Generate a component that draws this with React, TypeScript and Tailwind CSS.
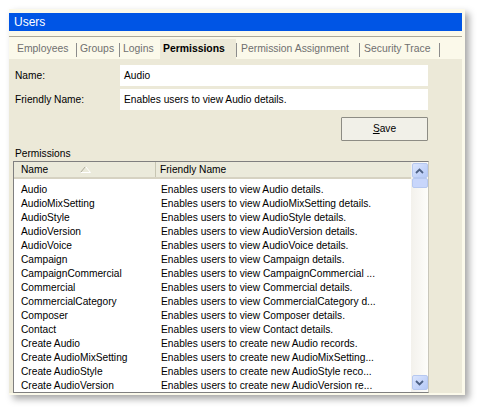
import React from 'react'

const rows: [string, string][] = [
  ['Audio', 'Enables users to view Audio details.'],
  ['AudioMixSetting', 'Enables users to view AudioMixSetting details.'],
  ['AudioStyle', 'Enables users to view AudioStyle details.'],
  ['AudioVersion', 'Enables users to view AudioVersion details.'],
  ['AudioVoice', 'Enables users to view AudioVoice details.'],
  ['Campaign', 'Enables users to view Campaign details.'],
  ['CampaignCommercial', 'Enables users to view CampaignCommercial ...'],
  ['Commercial', 'Enables users to view Commercial details.'],
  ['CommercialCategory', 'Enables users to view CommercialCategory d...'],
  ['Composer', 'Enables users to view Composer details.'],
  ['Contact', 'Enables users to view Contact details.'],
  ['Create Audio', 'Enables users to create new Audio records.'],
  ['Create AudioMixSetting', 'Enables users to create new AudioMixSetting...'],
  ['Create AudioStyle', 'Enables users to create new AudioStyle reco...'],
  ['Create AudioVersion', 'Enables users to create new AudioVersion re...'],
]

// sep: draw the little divider on the right of the tab
const tabs = [
  { label: 'Employees', w: 'w-[64px]', pl: 'pl-[4px]', sep: true },
  { label: 'Groups', w: 'w-[43px]', pl: 'pl-[3px]', sep: true },
  { label: 'Logins', w: 'w-[40px]', pl: 'pl-[3px]', sep: false },
  { label: 'Permissions', w: 'w-[77px]', pl: 'pl-[3px]', sep: true, active: true },
  { label: 'Permission Assignment', w: 'w-[123px]', pl: 'pl-[4px]', sep: true },
  { label: 'Security Trace', w: 'w-[80px]', pl: 'pl-[4px]', sep: true },
]

function ScrollButton({ up }: { up?: boolean }) {
  return (
    <div className="w-[16px] h-[15px] rounded-[2px] border border-[#b6c8f0] bg-gradient-to-br from-[#dbe5fd] to-[#b5c9f7] flex items-center justify-center">
      <svg width="9" height="6" viewBox="0 0 9 6">
        <path
          d={up ? 'M1 5 L4.5 1.5 L8 5' : 'M1 1 L4.5 4.5 L8 1'}
          fill="none"
          stroke="#4d6185"
          strokeWidth="1.8"
        />
      </svg>
    </div>
  )
}

export default function App() {
  return (
    <div
      className="w-[479px] h-[409px] bg-white pt-[9px] pl-[9px] text-[10.2px] text-black"
      style={{ fontFamily: '"Liberation Sans", Arial, sans-serif' }}
    >
      <div className="w-[456px] h-[386px] bg-[#fbf9ea] flex flex-col pr-[3px] pb-[2px] shadow-[4px_4px_7px_rgba(0,0,0,0.35)]">
        <div className="mt-[4px] h-[18px] bg-[#0055e5] text-white text-[12px] leading-[18px] pl-[5px]">Users</div>
        <div className="h-[5px]" />
        <div className="h-px bg-[#aca899]" />

        <div className="h-[22px] flex items-end pl-[4px]">
          {tabs.map(t => (
            <div key={t.label} className={`${t.w} h-[20px] flex items-center`}>
              <div
                className={`flex-1 h-full ${t.pl} flex items-center text-[10.4px] ${
                  t.active ? 'bg-[#ece9d8] font-bold text-black' : 'text-[#707070]'
                }`}
              >
                {t.label}
              </div>
              {t.sep && <div className="w-px h-[14px] bg-[#8c8c8c] mt-[2px]" />}
            </div>
          ))}
        </div>

        <div className="flex-1 bg-[#ece9d8] px-[4px] pt-[6px] flex flex-col">
          <div className="flex items-center h-[21px]">
            <div className="w-[107px] pl-[2px]">Name:</div>
            <div className="w-[308px] h-[21px] bg-white flex items-center pl-[4px]">Audio</div>
          </div>
          <div className="flex items-center h-[21px] mt-[3px]">
            <div className="w-[107px] pl-[2px]">Friendly Name:</div>
            <div className="w-[308px] h-[21px] bg-white flex items-center pl-[4px]">Enables users to view Audio details.</div>
          </div>
          <div className="flex justify-end w-[415px] mt-[7px]">
            <button className="w-[87px] h-[24px] border border-[#8d8c84] bg-[#f1f0e8] rounded-[1px] text-black">
              <span className="underline">S</span>ave
            </button>
          </div>
          <div className="mt-[6px] h-[14px] pl-[2px] leading-[14px]">Permissions</div>

          <div className="w-[416px] h-[232px] border border-[#7f7f7f] border-r-[#c9c7ba] bg-white flex">
            <div className="flex-1 flex flex-col">
              <div className="h-[18px] bg-[#ebeadb] border-b-2 border-[#d6d2c2] flex">
                <div className="w-[142px] border-r border-[#c7c5b2] pl-[7px] flex items-center gap-[32px]">
                  Name
                  <svg width="11" height="7" viewBox="0 0 11 7">
                    <path d="M0.5 6.5 L5.5 0.5" stroke="#aca899" fill="none" />
                    <path d="M5.5 0.5 L10.5 6.5 L0.5 6.5" stroke="#ffffff" fill="none" />
                  </svg>
                </div>
                <div className="flex-1 pl-[4px] flex items-center">Friendly Name</div>
              </div>
              <div className="pt-[3px]">
                {rows.map(([n, f]) => (
                  <div key={n} className="h-[14px] flex items-center">
                    <div className="w-[142px] pl-[7px] whitespace-nowrap">{n}</div>
                    <div className="flex-1 pl-[5px] whitespace-nowrap">{f}</div>
                  </div>
                ))}
              </div>
            </div>
            <div className="w-[17px] bg-gradient-to-r from-[#f3f1ec] to-[#fdfdfa] flex flex-col items-center pt-px pb-[2px]">
              <ScrollButton up />
              <div className="w-[16px] h-[10px] rounded-[2px] border border-[#b6c8f0] bg-[#c8d6fb]" />
              <div className="flex-1" />
              <ScrollButton />
            </div>
          </div>
        </div>
      </div>
    </div>
  )
}
